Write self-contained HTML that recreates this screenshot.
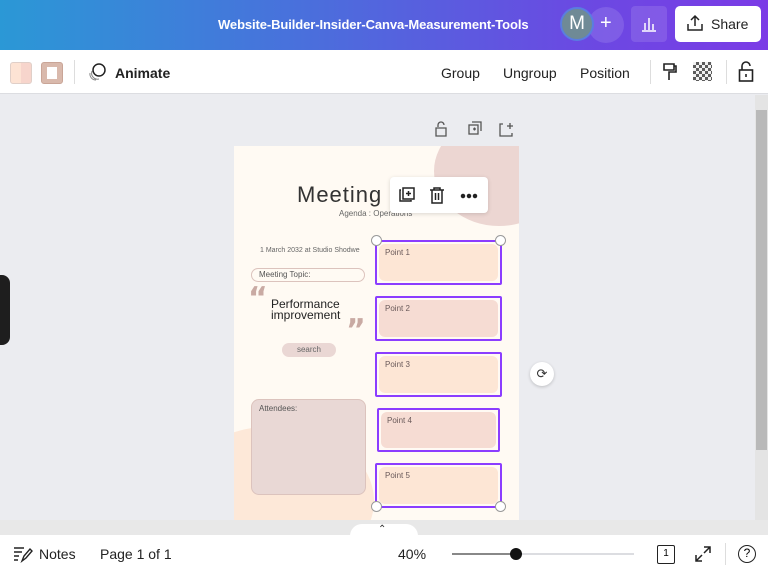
<!DOCTYPE html>
<html><head><style>
*{margin:0;padding:0;box-sizing:border-box}
body{width:768px;height:571px;overflow:hidden;font-family:"Liberation Sans",sans-serif;background:#ebecf0;position:relative}
.a{position:absolute}
.hdr{left:0;top:0;width:768px;height:50px;background:linear-gradient(90deg,#2b98d6 0%,#4a6fdc 40%,#6a4ae2 75%,#7b3be6 100%)}
.tb{left:0;top:50px;width:768px;height:44px;background:#fff;border-bottom:1px solid #dcdde1}
.t{font-size:14px;color:#222}
.box{border:2px solid #8b3dff;border-radius:2px}
.pt{border-radius:6px;position:absolute;left:2px;top:2px;right:2px;bottom:2px;font-size:8px;color:#6a5a5a;padding:4px 6px}
.h{width:11px;height:11px;border-radius:50%;background:#fff;border:1px solid #999}
</style></head><body>
<div class="a hdr"></div>
<div class="a" style="left:218px;top:17px;color:#fff;font-size:13px;font-weight:bold;letter-spacing:-0.1px">Website-Builder-Insider-Canva-Measurement-Tools</div>
<div class="a" style="left:588px;top:7px;width:36px;height:36px;border-radius:50%;background:rgba(255,255,255,.12)"></div>
<div class="a" style="left:600px;top:12px;color:#fff;font-size:20px">+</div>
<div class="a" style="left:560px;top:7px;width:34px;height:34px;border-radius:50%;background:#6f8a96;border:2px solid #5a7de0;color:#fff;font-size:19px;text-align:center;line-height:30px">M</div>
<div class="a" style="left:631px;top:6px;width:36px;height:36px;border-radius:4px;background:rgba(255,255,255,.12)"></div>
<svg class="a" style="left:640px;top:14px" width="18" height="18"><path d="M2 17h14M5 16V9M9 16V4M13 16V10" stroke="#fff" stroke-width="1.5"/></svg>
<div class="a" style="left:675px;top:6px;width:86px;height:36px;border-radius:5px;background:#fff"></div>
<svg class="a" style="left:686px;top:14px" width="18" height="18"><path d="M9 12V2M5 6l4-4 4 4M2 10v6h14v-6" stroke="#222" stroke-width="1.5" fill="none"/></svg>
<div class="a t" style="left:711px;top:16px">Share</div>

<div class="a tb"></div>
<div class="a" style="left:10px;top:62px;width:22px;height:22px;border-radius:3px;background:linear-gradient(90deg,#fde3d4 50%,#f7d5cc 50%);border:1px solid #e0cfc8"></div>
<div class="a" style="left:41px;top:62px;width:22px;height:22px;border-radius:3px;background:#d9b9ac;border:1px solid #c9a597"></div>
<div class="a" style="left:47px;top:67px;width:10px;height:12px;background:#fff"></div>
<div class="a" style="left:74px;top:60px;width:1px;height:24px;background:#ddd"></div>
<svg class="a" style="left:87px;top:62px" width="20" height="20"><circle cx="12" cy="8" r="6" stroke="#222" stroke-width="1.5" fill="none"/><path d="M5 9a6 6 0 0 0 7 8M3 11a6 6 0 0 0 6 7" stroke="#888" fill="none"/></svg>
<div class="a t" style="left:115px;top:65px;font-weight:bold">Animate</div>
<div class="a t" style="left:441px;top:65px">Group</div>
<div class="a t" style="left:503px;top:65px">Ungroup</div>
<div class="a t" style="left:580px;top:65px">Position</div>
<div class="a" style="left:650px;top:60px;width:1px;height:24px;background:#ddd"></div>
<svg class="a" style="left:662px;top:62px" width="16" height="20"><path d="M2 2h10v6H2zM12 4h2v6H7v8" stroke="#222" stroke-width="1.6" fill="none"/></svg>
<div class="a" style="left:693px;top:62px;width:19px;height:19px;background:repeating-conic-gradient(#333 0 25%,#eee 0 50%) 0 0/6px 6px;opacity:.8"></div>
<div class="a" style="left:726px;top:60px;width:1px;height:24px;background:#ddd"></div>
<svg class="a" style="left:738px;top:61px" width="16" height="22"><path d="M4 9V5a4 4 0 0 1 8 0" stroke="#222" stroke-width="1.6" fill="none"/><rect x="1.5" y="9" width="13" height="11" stroke="#222" stroke-width="1.6" fill="none"/><path d="M8 13v3" stroke="#222" stroke-width="1.6"/></svg>

<svg class="a" style="left:433px;top:121px" width="90" height="16" fill="none" stroke="#555" stroke-width="1.3"><path d="M5 6V4a3 3 0 0 1 6 0M3 7h10v8H3z"/><rect x="36" y="4" width="9" height="9"/><path d="M39 1h9v9M40 8h3M41.5 6.5v3"/><path d="M70 3h-3v12h12v-3M74 5h6M77 2v6"/></svg>

<div class="a" style="left:234px;top:146px;width:285px;height:374px;background:#fffaf3;overflow:hidden">
  <div class="a" style="left:200px;top:-30px;width:130px;height:110px;border-radius:50%;background:#ecd6d2"></div>
  <div class="a" style="left:-60px;top:280px;width:200px;height:150px;border-radius:50%;background:#fde8d8"></div>
  <div class="a" style="left:63px;top:36px;font-size:22px;color:#333;letter-spacing:1px">Meeting</div>
  <div class="a" style="left:105px;top:63px;font-size:8px;color:#666">Agenda : Operations</div>
  <div class="a" style="left:26px;top:101px;font-size:7px;color:#666">1 March 2032 at Studio Shodwe</div>
  <div class="a" style="left:17px;top:122px;width:114px;height:14px;border:1.5px solid #dcc3bd;border-radius:8px;font-size:8px;color:#555;padding:1px 7px">Meeting Topic:</div>
  <div class="a" style="left:14px;top:138px;font-size:30px;color:#c9aaa3;font-weight:bold;font-family:'DejaVu Sans',sans-serif;line-height:30px">“</div>
  <div class="a" style="left:112px;top:170px;font-size:30px;color:#c9aaa3;font-weight:bold;font-family:'DejaVu Sans',sans-serif;line-height:30px">”</div>
  <div class="a" style="left:37px;top:153px;font-size:12px;color:#222;line-height:11px">Performance<br>improvement</div>
  <div class="a" style="left:48px;top:197px;width:54px;height:14px;border-radius:7px;background:#ead7d4;font-size:8px;color:#666;text-align:center;line-height:14px">search</div>
  <div class="a" style="left:17px;top:253px;width:115px;height:96px;border-radius:8px;background:#e9d8d5;border:1.5px solid #dcc3bd;font-size:8px;color:#555;padding:4px 7px">Attendees:</div>
</div>
<div class="a box" style="left:375px;top:240px;width:127px;height:45px"><div class="pt" style="background:#fde6d5">Point 1</div></div>
<div class="a box" style="left:375px;top:296px;width:127px;height:45px"><div class="pt" style="background:#f6dcd3">Point 2</div></div>
<div class="a box" style="left:375px;top:352px;width:127px;height:45px"><div class="pt" style="background:#fde6d5">Point 3</div></div>
<div class="a box" style="left:377px;top:408px;width:123px;height:44px"><div class="pt" style="background:#f6dcd3">Point 4</div></div>
<div class="a box" style="left:375px;top:463px;width:127px;height:45px"><div class="pt" style="background:#fde6d5">Point 5</div></div>
<div class="a h" style="left:371px;top:235px"></div><div class="a h" style="left:495px;top:235px"></div>
<div class="a h" style="left:371px;top:501px"></div><div class="a h" style="left:495px;top:501px"></div>
<div class="a" style="left:390px;top:177px;width:98px;height:36px;background:#fff;border-radius:4px;box-shadow:0 1px 4px rgba(0,0,0,.15)"></div>
<svg class="a" style="left:398px;top:186px" width="82" height="18" fill="none" stroke="#222" stroke-width="1.5"><path d="M3 4H2v11h11v-1"/><rect x="5" y="2" width="11" height="11"/><path d="M8 7.5h5M10.5 5v5"/><path d="M32 4h14M36 4V2h6v2M34 4v13h10V4M37.5 7v7M40.5 7v7"/><circle cx="65" cy="10" r="1.5" fill="#222"/><circle cx="71" cy="10" r="1.5" fill="#222"/><circle cx="77" cy="10" r="1.5" fill="#222"/></svg>
<div class="a" style="left:530px;top:362px;width:24px;height:24px;border-radius:50%;background:#fff;box-shadow:0 1px 3px rgba(0,0,0,.2);text-align:center;line-height:24px;font-size:13px;color:#333">⟳</div>
<div class="a" style="left:0;top:275px;width:10px;height:70px;background:#1e1e1e;border-radius:0 8px 8px 0"></div>
<div class="a" style="left:755px;top:95px;width:13px;height:425px;background:#e4e4e4"></div>
<div class="a" style="left:756px;top:110px;width:11px;height:340px;background:#b9b9b9"></div>
<div class="a" style="left:0;top:520px;width:768px;height:15px;background:#e8e8e8"></div>
<div class="a" style="left:350px;top:524px;width:68px;height:12px;background:#fff;border-radius:14px 14px 0 0"></div>
<div class="a" style="left:378px;top:524px;font-size:10px;color:#333">⌃</div>
<div class="a" style="left:0;top:535px;width:768px;height:36px;background:#fff"></div>
<svg class="a" style="left:13px;top:545px" width="20" height="18" fill="none" stroke="#222" stroke-width="1.4"><path d="M1 3h10M1 7h8M1 11h5M1 15h4M9 16l2-5 6-7 2 2-6 7z"/></svg>
<div class="a t" style="left:39px;top:546px">Notes</div>
<div class="a t" style="left:100px;top:546px">Page 1 of 1</div>
<div class="a t" style="left:398px;top:546px">40%</div>
<div class="a" style="left:452px;top:553px;width:182px;height:2px;background:#dcdde1"></div>
<div class="a" style="left:452px;top:553px;width:64px;height:2px;background:#888"></div>
<div class="a" style="left:510px;top:548px;width:12px;height:12px;border-radius:50%;background:#111"></div>
<div class="a" style="left:657px;top:545px;width:18px;height:19px;border:1.5px solid #222;border-radius:2px;font-size:10px;text-align:center;line-height:16px">1</div>
<svg class="a" style="left:694px;top:545px" width="18" height="18" fill="none" stroke="#222" stroke-width="1.5"><path d="M10 2h6v6M16 2l-6 6M8 16H2v-6M2 16l6-6"/></svg>
<div class="a" style="left:725px;top:543px;width:1px;height:22px;background:#ddd"></div>
<div class="a" style="left:738px;top:545px;width:18px;height:18px;border:1.5px solid #222;border-radius:50%;font-size:12px;text-align:center;line-height:15px">?</div>
</body></html>
